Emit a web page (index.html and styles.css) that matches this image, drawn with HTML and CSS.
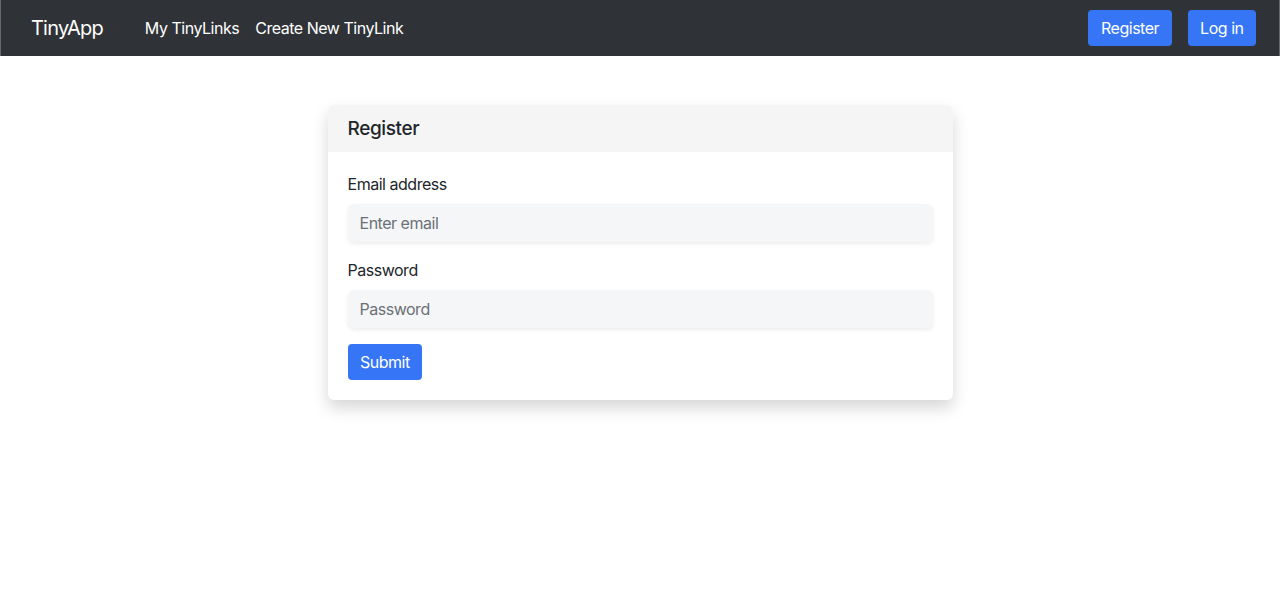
FILE: index.html
```html
<!DOCTYPE html>
<html lang="en">
<head>
<meta charset="utf-8">
<title>TinyApp</title>
<link rel="stylesheet" href="styles.css">
</head>
<body>
<nav class="navbar">
  <a class="brand" href="#">TinyApp</a>
  <div class="nav-links">
    <a class="nav-link" href="#">My TinyLinks</a>
    <a class="nav-link" href="#">Create New TinyLink</a>
  </div>
  <div class="nav-actions">
    <a class="btn" href="#">Register</a>
    <a class="btn" href="#">Log in</a>
  </div>
</nav>
<main class="main">
  <section class="card">
    <header class="card-header">Register</header>
    <form class="card-body">
      <div class="field">
        <label class="label" for="email">Email address</label>
        <input class="input" id="email" type="email" placeholder="Enter email">
      </div>
      <div class="field">
        <label class="label" for="password">Password</label>
        <input class="input" id="password" type="password" placeholder="Password">
      </div>
      <button class="btn" type="submit">Submit</button>
    </form>
  </section>
</main>
</body>
</html>
```
FILE: styles.css
```css
* { box-sizing: border-box; }
html, body { margin: 0; padding: 0; }
body {
  font-family: "Inter", "Liberation Sans", sans-serif;
  font-size: 16px;
  line-height: 1.5;
  letter-spacing: -0.03em;
  color: #212529;
  background: #fff;
  min-height: 100vh;
}
a { text-decoration: none; }
.navbar {
  height: 56px;
  background: #2f3237;
  border-left: 1px solid #66686c;
  border-right: 1px solid #66686c;
  display: flex;
  align-items: center;
  padding: 0 23px 0 30px;
}
.brand {
  color: #fff;
  font-size: 20px;
  line-height: 30px;
  letter-spacing: -0.04em;
  margin-right: 34px;
}
.nav-links { display: flex; }
.nav-link {
  color: #fff;
  padding: 8px;
  line-height: 24px;
}
.nav-actions {
  margin-left: auto;
  display: flex;
  gap: 16px;
}
.btn {
  display: inline-block;
  background: #3676f6;
  color: #fff;
  border: none;
  border-radius: 4px;
  padding: 6px 12.5px;
  font: inherit;
  letter-spacing: inherit;
  line-height: 24px;
  cursor: pointer;
}
.main {
  display: flex;
  justify-content: center;
  padding: 49px 0 40px;
}
.card {
  width: 625px;
  background: #fff;
  border-radius: 6px;
  box-shadow: 0 8px 16px rgba(0,0,0,.16);
  overflow: hidden;
}
.card-header {
  background: #f5f5f5;
  padding: 12px 20px 11px;
  font-size: 19px;
  line-height: 24px;
  font-weight: 500;
  letter-spacing: -0.02em;
}
.card-body {
  padding: 20px;
  display: flex;
  flex-direction: column;
  align-items: flex-start;
}
.field {
  width: 100%;
  margin-bottom: 16px;
}
.label {
  display: block;
  margin-bottom: 8px;
  line-height: 24px;
}
.input {
  display: block;
  width: 100%;
  height: 38px;
  border: none;
  border-radius: 6px;
  background: #f5f6f8;
  box-shadow: 0 2px 4px rgba(0,0,0,.075);
  padding: 6px 12px;
  font: inherit;
  letter-spacing: inherit;
  color: #212529;
  outline: none;
}
.input::placeholder { color: #6b7076; }
```
